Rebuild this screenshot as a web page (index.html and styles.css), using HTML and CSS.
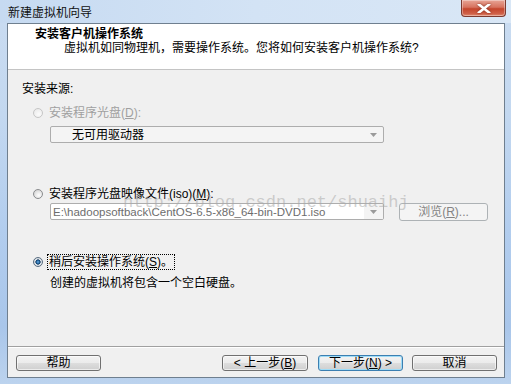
FILE: index.html
```html
<!DOCTYPE html>
<html lang="zh-CN">
<head>
<meta charset="utf-8">
<title>新建虚拟机向导</title>
<link rel="stylesheet" href="styles.css">
</head>
<body>
<div class="window">
  <div class="titlebar">
    <span class="title">新建虚拟机向导</span>
    <div class="close">
      <svg width="14" height="9" viewBox="0 0 14 9"><path d="M2 0.5 L12 8.5 M12 0.5 L2 8.5" stroke="#ffffff" stroke-width="2.6" stroke-linecap="square"/></svg>
    </div>
  </div>
  <div class="client">
    <div class="header">
      <div class="h-title">安装客户机操作系统</div>
      <div class="h-sub">虚拟机如同物理机，需要操作系统。您将如何安装客户机操作系统?</div>
    </div>
    <div class="content">
      <div class="label">安装来源:</div>
      <div class="radio-row r1 disabled">
        <span class="radio radio-disabled"></span>
        <span class="rtext">安装程序光盘(<u>D</u>):</span>
      </div>
      <div class="combo combo-disabled">
        <span class="combo-text">无可用驱动器</span>
        <svg class="arrow" width="7" height="4" viewBox="0 0 7 4"><polygon points="0,0 7,0 3.5,4" fill="#9a9a9a"/></svg>
      </div>
      <div class="radio-row r2">
        <span class="radio"></span>
        <span class="rtext">安装程序光盘映像文件(iso)(<u>M</u>):</span>
      </div>
      <div class="iso-row">
        <div class="combo combo-iso">
          <span class="combo-text iso-text">E:\hadoopsoftback\CentOS-6.5-x86_64-bin-DVD1.iso</span>
          <span class="combo-btn"><svg class="arrow" width="7" height="4" viewBox="0 0 7 4"><polygon points="0,0 7,0 3.5,4" fill="#9a9a9a"/></svg></span>
        </div>
        <div class="btn btn-disabled browse">浏览(<u>R</u>)...</div>
      </div>
      <div class="radio-row r3">
        <span class="radio radio-checked"></span>
        <span class="rtext focus">稍后安装操作系统(<u>S</u>)。</span>
      </div>
      <div class="desc">创建的虚拟机将包含一个空白硬盘。</div>
      <div class="watermark">http://blog.csdn.net/shuaihj</div>
    </div>
    <div class="footer">
      <div class="btn help">帮助</div>
      <div class="spacer"></div>
      <div class="btn back">&lt; 上一步(<u>B</u>)</div>
      <div class="btn next default">下一步(<u>N</u>) &gt;</div>
      <div class="btn cancel">取消</div>
    </div>
  </div>
</div>
</body>
</html>
```
FILE: styles.css
```css
* { box-sizing: border-box; }
html, body { margin: 0; padding: 0; }
body {
  width: 511px;
  height: 384px;
  overflow: hidden;
  font-family: "Liberation Sans", "Noto Sans CJK SC", sans-serif;
  font-size: 12px;
  color: #000;
}
u { text-decoration: underline; text-underline-offset: 1px; }

.window {
  width: 511px;
  height: 384px;
  display: flex;
  flex-direction: column;
  padding: 0 6px 6px 7px;
  background: linear-gradient(180deg, #cadcf1 0%, #c3d8f0 30%, #b2cdee 60%, #a9c6ea 85%, #bcd3ee 100%);
}

.titlebar {
  height: 23px;
  margin: 0 -6px 0 -7px;
  padding-left: 8px;
  display: flex;
  align-items: flex-start;
  background: linear-gradient(90deg, #c6daf1 0%, #d3e3f5 50%, #d9e7f6 100%);
}
.title {
  margin-top: 6px;
  line-height: 14px;
  color: #101010;
}
.close {
  margin-left: auto;
  margin-right: 5px;
  width: 45px;
  height: 17px;
  border: 1px solid #7c3a30;
  border-top: none;
  border-radius: 0 0 4px 4px;
  background: linear-gradient(180deg, #e8a596 0%, #d7735f 45%, #c4452c 55%, #cf6048 85%, #e08b72 100%);
  display: flex;
  align-items: center;
  justify-content: center;
  box-shadow: inset 0 0 0 1px rgba(255,255,255,0.35);
}
.close svg { filter: drop-shadow(0 0 1px #7a2a1a); }

.client {
  flex: 1;
  display: flex;
  flex-direction: column;
  border: 1px solid #6f7f8f;
  background: #f0f0f0;
}

.header {
  height: 46px;
  flex: none;
  background: #ffffff;
  border-bottom: 1px solid #c4c4c4;
  padding: 3px 0 0 27px;
}
.h-title {
  font-weight: bold;
  line-height: 14px;
}
.h-sub {
  line-height: 14px;
  padding-left: 29px;
}

.content {
  flex: 1;
  position: relative;
  padding: 12px 0 0 14px;
}
.label { line-height: 14px; }

.radio-row {
  display: flex;
  align-items: center;
  height: 14px;
  padding-left: 11px;
}
.r1 { margin-top: 10px; }
.r2 { margin-top: 44px; }
.r3 { margin-top: 34px; }
.rtext { margin-left: 6px; line-height: 14px; white-space: nowrap; }
.disabled .rtext { color: #a0a0a0; }

.radio {
  width: 10px;
  height: 10px;
  border-radius: 50%;
  border: 1px solid #8a8c8e;
  background: radial-gradient(circle at 60% 65%, #ffffff 0%, #e8e8e8 45%, #c9c9c9 100%);
  flex: none;
}
.radio-disabled {
  border-color: #c6c6c6;
  background: radial-gradient(circle at 60% 65%, #fbfbfb 0%, #efefef 60%, #e0e0e0 100%);
}
.radio-checked {
  border-color: #5b6e82;
  background: radial-gradient(circle at 50% 50%, #6fb2e6 0%, #1f5f98 28%, #17395c 42%, #dfe6ec 50%, #c2c9cf 100%);
}

.combo {
  width: 334px;
  height: 17px;
  margin-left: 28px;
  border: 1px solid #adadad;
  border-radius: 2px;
  display: flex;
  align-items: center;
  position: relative;
}
.combo-disabled {
  margin-top: 6px;
  background: #f4f4f4;
}
.combo-text {
  line-height: 14px;
  padding-left: 21px;
  white-space: nowrap;
}
.combo .arrow { margin-left: auto; margin-right: 5px; }
.combo-disabled .arrow { margin-right: 6px; }

.iso-row {
  display: flex;
  align-items: flex-start;
  margin-top: 2px;
  height: 18px;
}
.combo-iso {
  margin-left: 28px;
  background: #ffffff;
  overflow: hidden;
}
.iso-text {
  padding-left: 2px;
  color: #6d6d6d;
  flex: 1;
  font-size: 11.5px;
}
.combo-btn {
  width: 19px;
  height: 100%;
  background: #f4f4f4;
  display: flex;
  align-items: center;
  justify-content: center;
}
.combo-btn .arrow { margin: 0; }

.btn {
  height: 16px;
  border: 1px solid #707070;
  border-radius: 3px;
  background: linear-gradient(180deg, #f3f3f3 0%, #ebebeb 48%, #dddddd 52%, #cfcfcf 100%);
  display: flex;
  align-items: center;
  justify-content: center;
  line-height: 14px;
  white-space: nowrap;
  box-shadow: inset 0 0 0 1px rgba(255,255,255,0.6);
}
.btn-disabled {
  border-color: #adb2b5;
  background: #f4f4f4;
  color: #838383;
  box-shadow: none;
}
.browse {
  width: 89px;
  height: 18px;
  margin-left: 15px;
}
.desc {
  margin-top: 7px;
  margin-left: 28px;
  line-height: 14px;
}
.focus {
  outline: 1px dotted #000;
  outline-offset: 0px;
  padding: 0 1px;
  margin-left: 5px;
}

.watermark {
  position: absolute;
  left: 115px;
  top: 123px;
  font-family: "Liberation Mono", monospace;
  font-size: 17px;
  line-height: 20px;
  color: rgba(170, 170, 170, 0.55);
  white-space: nowrap;
  pointer-events: none;
}

.footer {
  height: 31px;
  flex: none;
  border-top: 1px solid #a0a0a0;
  box-shadow: inset 0 1px 0 #ffffff;
  display: flex;
  align-items: flex-start;
  padding: 8px 7px 0 8px;
}
.spacer { flex: 1; }
.help { width: 85px; }
.back { width: 86px; }
.next { width: 85px; margin-left: 10px; }
.cancel { width: 85px; margin-left: 9px; }
.default {
  border-color: #3c7fb1;
  box-shadow: inset 0 0 0 1px #9fdcf7;
}
```
